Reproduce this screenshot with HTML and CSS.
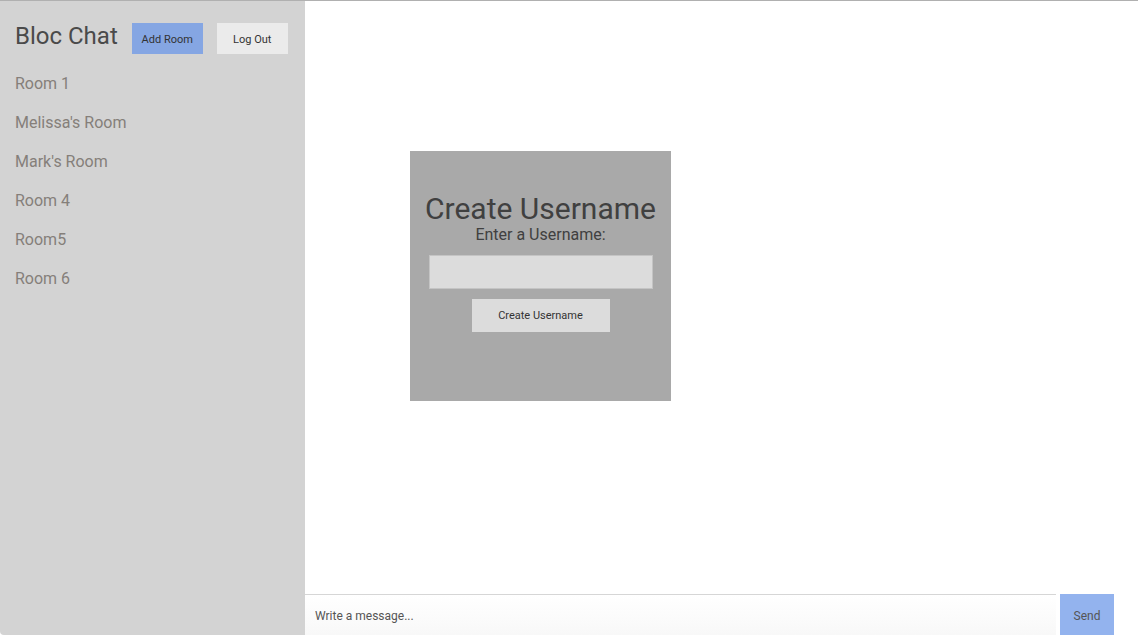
FILE: index.html
```html
<!DOCTYPE html>
<html>
<head>
<meta charset="utf-8">
<link rel="stylesheet" href="styles.css">
</head>
<body>
<div class="app">
  <aside class="sidebar">
    <div class="header">
      <h1 class="brand">Bloc Chat</h1>
      <button class="btn btn-add">Add Room</button>
      <button class="btn btn-logout">Log Out</button>
    </div>
    <ul class="rooms">
      <li>Room 1</li>
      <li>Melissa's Room</li>
      <li>Mark's Room</li>
      <li>Room 4</li>
      <li>Room5</li>
      <li>Room 6</li>
    </ul>
  </aside>
  <main class="main">
    <div class="content">
      <div class="modal">
        <h2 class="modal-title">Create Username</h2>
        <div class="modal-label">Enter a Username:</div>
        <input class="modal-input" type="text">
        <button class="modal-btn">Create Username</button>
      </div>
    </div>
    <form class="composer">
      <input class="msg-input" type="text" placeholder="Write a message...">
      <button class="send-btn" type="button">Send</button>
    </form>
  </main>
</div>
</body>
</html>
```
FILE: styles.css
```css
* { box-sizing: border-box; }
html, body { margin: 0; padding: 0; }
body {
  font-family: Roboto, "Liberation Sans", sans-serif;
  background: #fff;
  border-top: 1px solid #b0b0b0;
  height: 635px;
  overflow: hidden;
}
.app {
  display: flex;
  height: 634px;
}
.sidebar {
  width: 305px;
  flex: 0 0 305px;
  background: #d3d3d3;
  border-bottom-left-radius: 4px;
}
.header {
  display: flex;
  align-items: flex-start;
  padding: 22px 0 0 15px;
  height: 53px;
}
.brand {
  margin: -2px 14px 0 0;
  font-size: 24px;
  font-weight: 400;
  color: #4a4a4a;
  line-height: 31px;
}
.btn {
  border: none;
  height: 31px;
  width: 71px;
  font-family: Roboto, "Liberation Sans", sans-serif;
  font-size: 11px;
  color: #333;
  padding: 2px 0 0;
}
.btn-add { background: #85a6e3; margin-right: 14px; }
.btn-logout { background: #ebebeb; }
.rooms {
  list-style: none;
  margin: 0;
  padding: 20px 0 0 15px;
}
.rooms li {
  font-size: 16px;
  color: #857f7a;
  height: 39px;
  line-height: 20px;
}
.main {
  flex: 1;
  display: flex;
  flex-direction: column;
}
.content {
  flex: 1;
  padding: 150px 0 0 105px;
}
.modal {
  width: 261px;
  height: 250px;
  background: #a9a9a9;
  display: flex;
  flex-direction: column;
  align-items: center;
  padding-top: 40px;
}
.modal-title {
  margin: 0;
  font-size: 30px;
  font-weight: 400;
  color: #404040;
  line-height: 36px;
}
.modal-label {
  font-size: 16px;
  color: #404040;
  line-height: 18px;
  margin-top: -1px;
}
.modal-input {
  margin-top: 11px;
  width: 224px;
  height: 34px;
  background: #dcdcdc;
  border: 1px solid #c4c4c4;
  outline: none;
}
.modal-btn {
  margin-top: 10px;
  width: 138px;
  height: 33px;
  background: #dcdcdc;
  border: none;
  font-family: Roboto, "Liberation Sans", sans-serif;
  font-size: 11px;
  color: #333;
}
.composer {
  display: flex;
  height: 41px;
  margin: 0;
  padding-right: 24px;
}
.msg-input {
  flex: 1;
  border: none;
  border-top: 1px solid #d6d6d6;
  background: linear-gradient(#fff, #f8f8f8);
  padding: 2px 10px 0;
  font-family: Roboto, "Liberation Sans", sans-serif;
  font-size: 12px;
  color: #333;
  outline: none;
  margin-right: 4px;
}
.msg-input::placeholder { color: #555; }
.send-btn {
  width: 54px;
  border: none;
  background: #93b3ee;
  font-family: Roboto, "Liberation Sans", sans-serif;
  font-size: 12px;
  color: #555;
  padding: 2px 0 0;
}
```
